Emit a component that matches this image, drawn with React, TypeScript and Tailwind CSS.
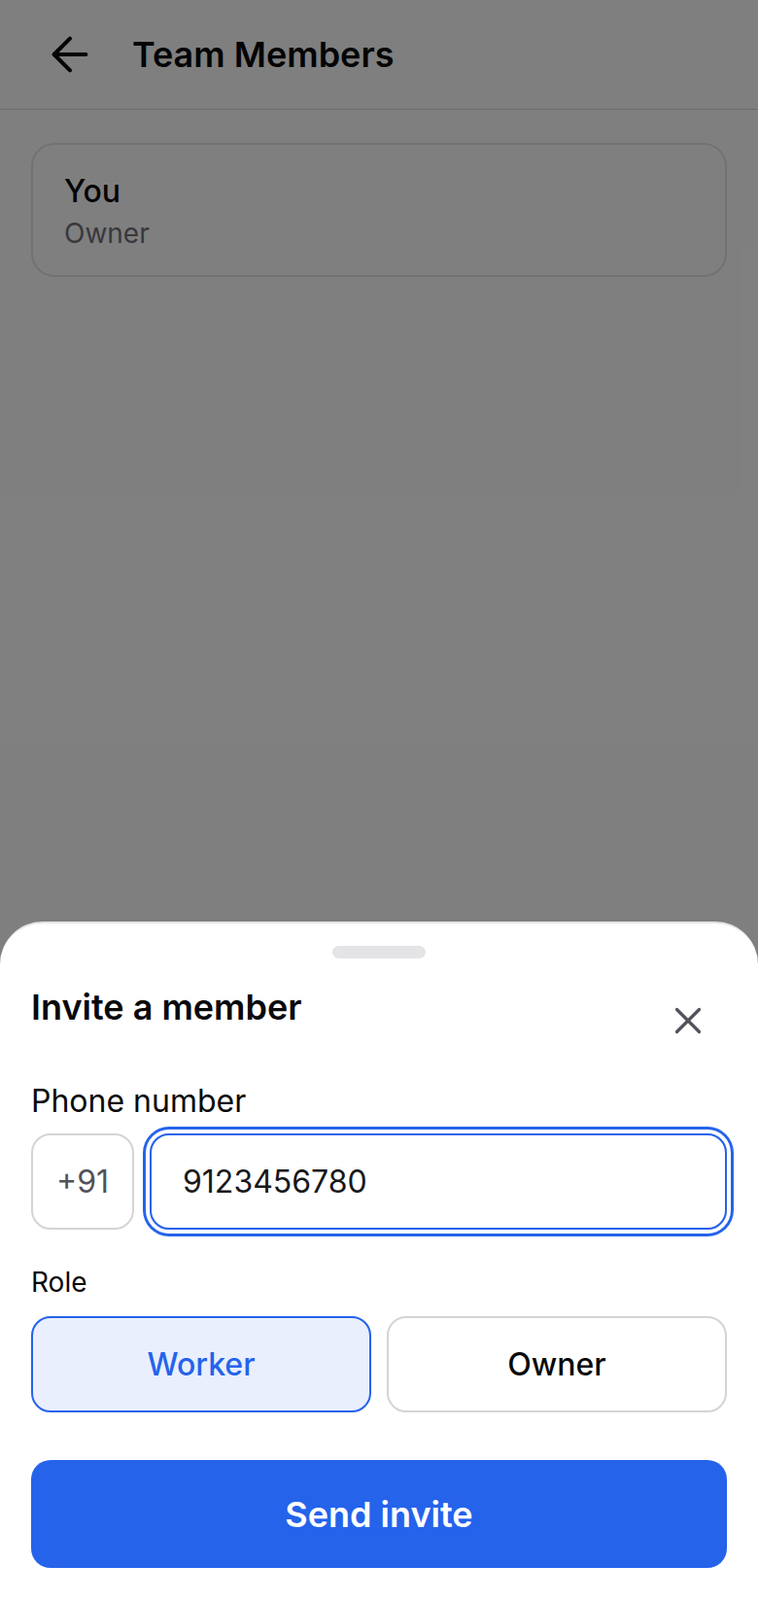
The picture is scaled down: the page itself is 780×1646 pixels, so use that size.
import React, { useState } from 'react';
import { ArrowLeft } from 'lucide-react';

type Role = 'worker' | 'owner';

const CloseIcon = () => (
  <svg width="48" height="48" viewBox="0 0 48 48" fill="none" stroke="currentColor" strokeWidth="3.25" strokeLinecap="round">
    <path d="M12.5 12.5 35.5 35.5M35.5 12.5 12.5 35.5" />
  </svg>
);

const App: React.FC = () => {
  const [role, setRole] = useState<Role>('worker');
  const [phone, setPhone] = useState('9123456780');

  return (
    <div className="relative h-[1646px] w-full overflow-hidden bg-white font-['Inter',sans-serif] text-[#09090b]">
      {/* Header */}
      <header className="flex h-[113px] items-center border-b border-[#d9d9de] bg-white">
        <button className="ml-[44px] flex h-[56px] w-[56px] items-center justify-center">
          <ArrowLeft size={56} strokeWidth={1.75} />
        </button>
        <h1 className="ml-[36px] text-[36px] font-semibold leading-[44px]">Team Members</h1>
      </header>

      {/* Members */}
      <div className="px-8 pt-[34px]">
        <div className="rounded-3xl border-2 border-[#e4e4e7] px-8 pt-7 pb-[25px]">
          <p className="text-[32px] font-medium leading-[40px]">You</p>
          <p className="mt-[5px] text-[28px] leading-[36px] text-[#71717a]">Owner</p>
        </div>
      </div>

      {/* Dim overlay */}
      <div className="absolute inset-0 bg-black/50" />

      {/* Bottom sheet */}
      <div className="absolute inset-x-0 bottom-0 rounded-t-[44px] border-t-2 border-[#e4e4e7] bg-white px-8 pb-[33px]">
        <div className="flex justify-center pt-[23px]">
          <div className="h-[13px] w-24 rounded-full bg-[#e4e4e7]" />
        </div>

        <div className="mt-6 flex items-start justify-between">
          <h2 className="mt-1 text-[36px] font-semibold leading-[44px]">Invite a member</h2>
          <button className="mr-4 mt-4 mb-4 text-[#52525b]">
            <CloseIcon />
          </button>
        </div>

        {/* Phone */}
        <label className="mt-[23px] block text-[32px] leading-[40px]" htmlFor="phone">
          Phone number
        </label>
        <div className="mt-[13px] flex gap-4">
          <div className="flex h-[99px] w-[106px] shrink-0 items-center justify-center rounded-[20px] border-2 border-[#d4d4d8] text-[32px] text-[#52525b]">
            +91
          </div>
          <input
            id="phone"
            className="h-[99px] min-w-0 flex-1 rounded-[20px] border-2 border-[#2563eb] px-8 text-[32px] text-[#18181b] outline-none ring-[3px] ring-[#2563eb] ring-offset-4"
            value={phone}
            onChange={(e) => setPhone(e.target.value)}
          />
        </div>

        {/* Role */}
        <p className="mt-[36px] text-[28px] leading-[36px]">Role</p>
        <div className="mt-[17px] grid grid-cols-2 gap-4">
          <button
            onClick={() => setRole('worker')}
            className={`h-[99px] rounded-[20px] border-2 text-[32px] font-medium ${
              role === 'worker' ? 'border-[#2563eb] bg-[#e9effd] text-[#2563eb]' : 'border-[#d4d4d8] bg-white text-[#09090b]'
            }`}
          >
            Worker
          </button>
          <button
            onClick={() => setRole('owner')}
            className={`h-[99px] rounded-[20px] border-2 text-[32px] font-medium ${
              role === 'owner' ? 'border-[#2563eb] bg-[#e9effd] text-[#2563eb]' : 'border-[#d4d4d8] bg-white text-[#09090b]'
            }`}
          >
            Owner
          </button>
        </div>

        <button className="mt-[49px] h-[111px] w-full rounded-[20px] bg-[#2563eb] text-[36px] font-semibold text-white">
          Send invite
        </button>
      </div>
    </div>
  );
};

export default App;
